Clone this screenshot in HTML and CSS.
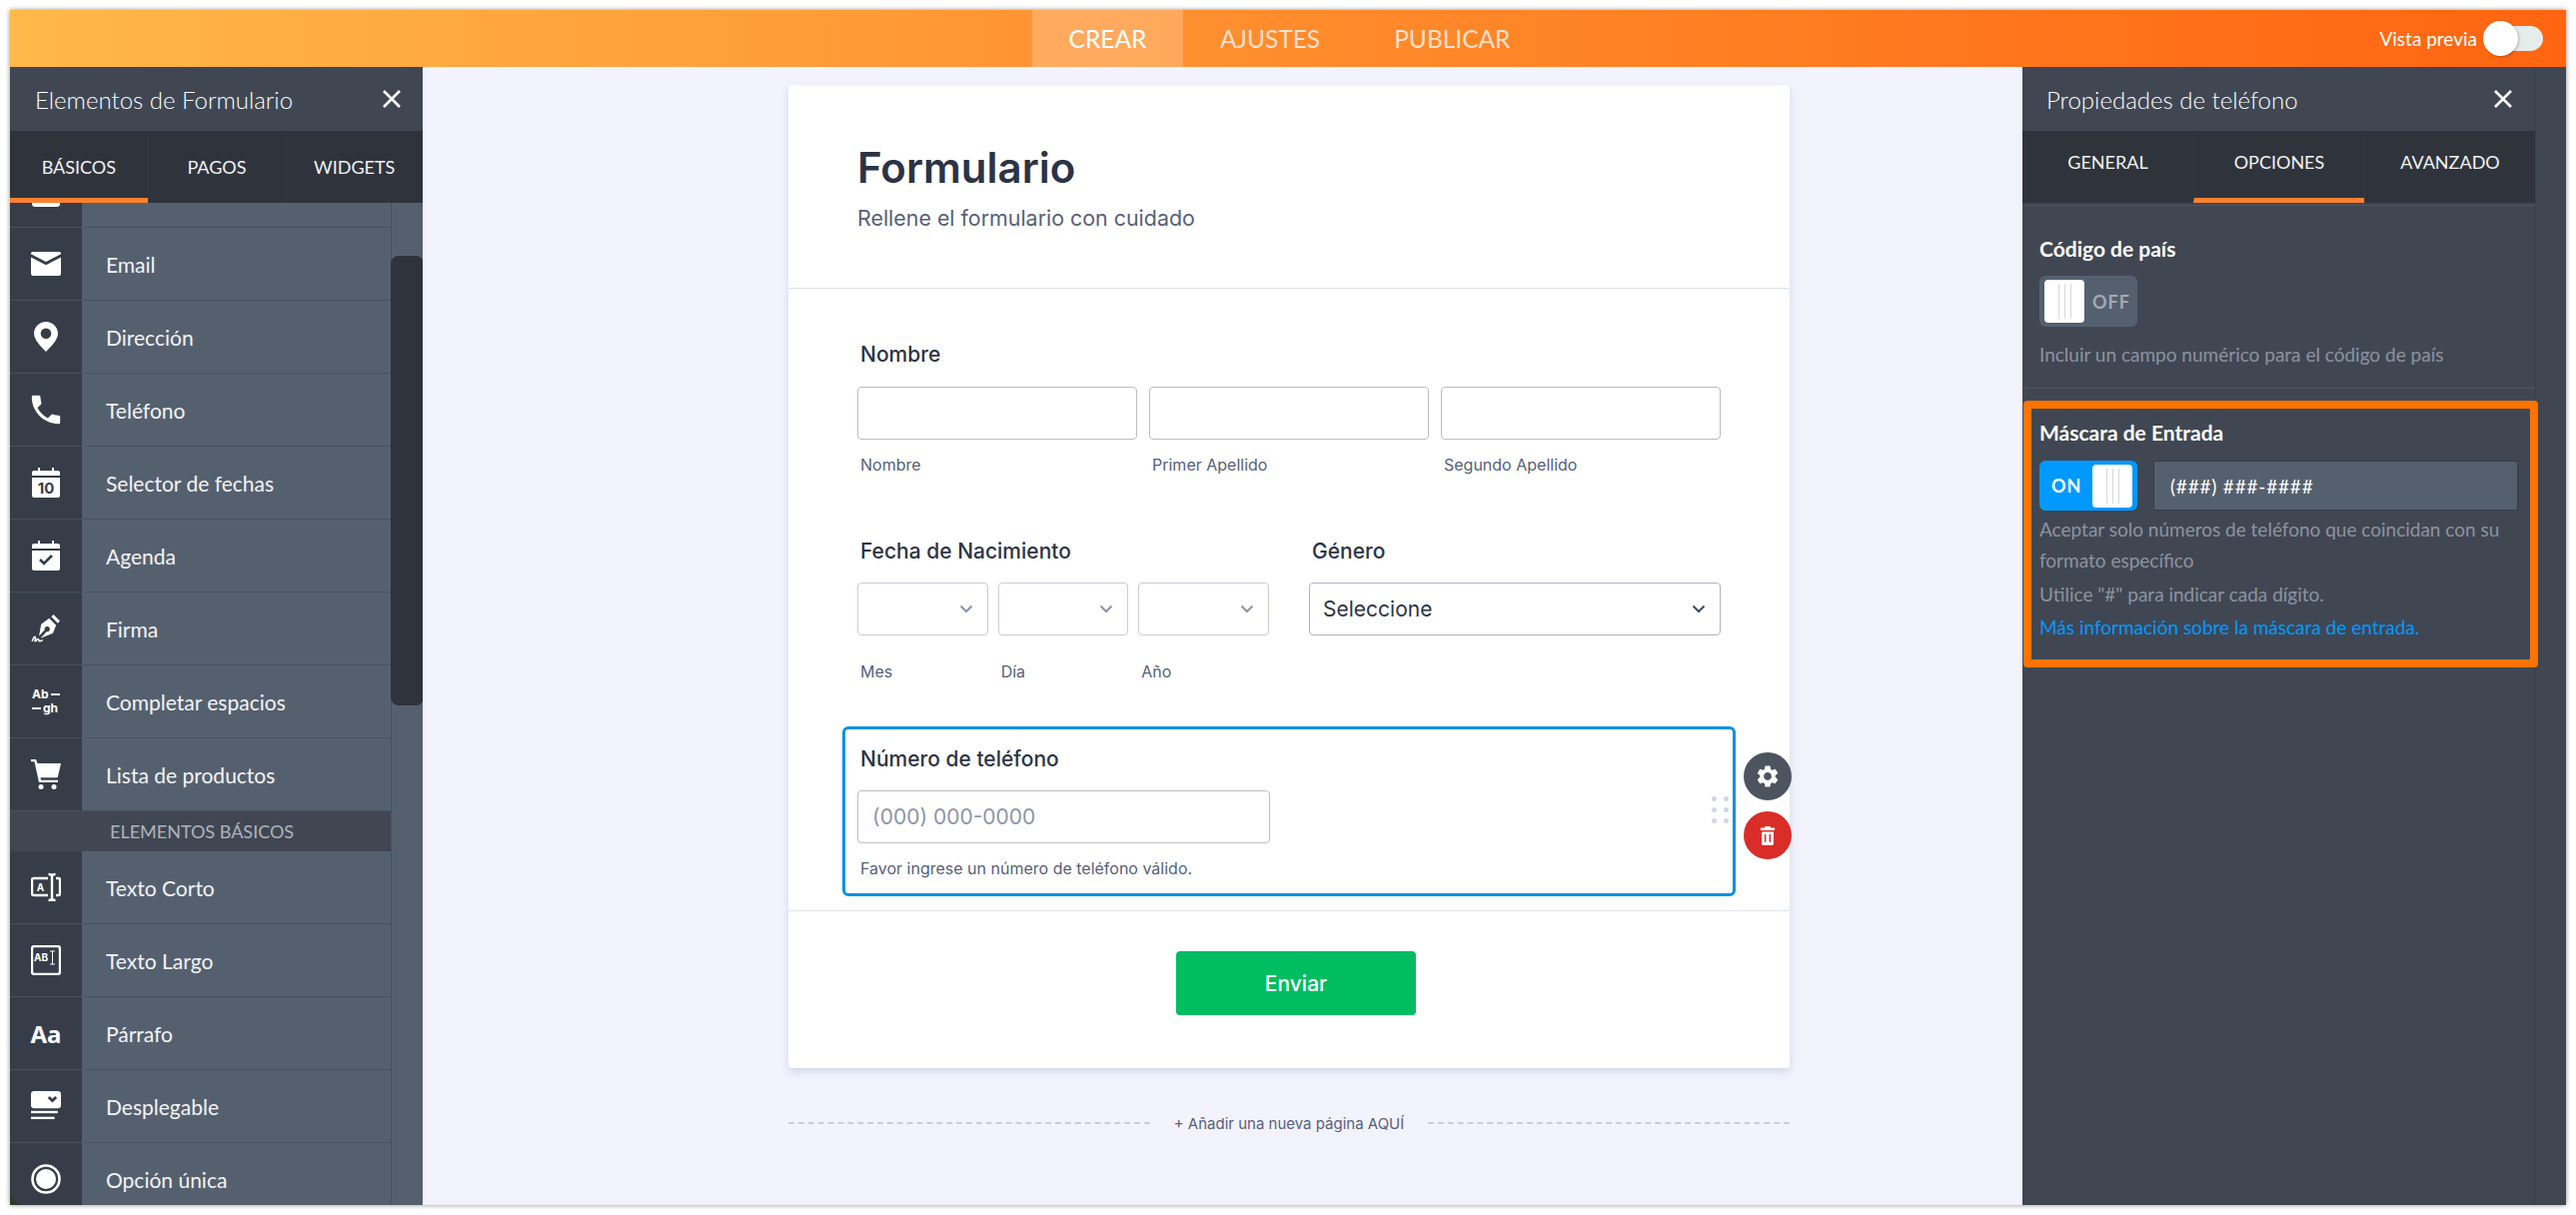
FILE: index.html
```html
<!DOCTYPE html>
<html lang="es">
<head>
    <meta charset="UTF-8">
    <meta name="viewport" content="width=device-width, initial-scale=1.0">
    <title>Formulario</title>
    <link rel="stylesheet" href="styles.css">
</head>
<body>
<div class="window">
    <header class="topbar">
        <nav class="topnav">
            <a class="topnav-item active">CREAR</a>
            <a class="topnav-item">AJUSTES</a>
            <a class="topnav-item">PUBLICAR</a>
        </nav>
        <div class="preview">
            <span>Vista previa</span>
            <div class="preview-switch"><div class="preview-knob"></div></div>
        </div>
    </header>

    <div class="main">
        <!-- left panel -->
        <aside class="elements">
            <div class="panel-head">
                <span>Elementos de Formulario</span>
                <svg class="close" viewBox="0 0 20 20"><path d="M2 2l16 16M18 2L2 18"/></svg>
            </div>
            <div class="tabs">
                <div class="tab active">BÁSICOS</div>
                <div class="tab">PAGOS</div>
                <div class="tab">WIDGETS</div>
            </div>
            <div class="list-wrap">
                <div class="list">
                    <div class="row row-cut"><div class="row-icon"><div class="cut-icon"></div></div><div class="row-text"></div></div>
                    <div class="row">
                        <div class="row-icon"><svg viewBox="0 0 30 24"><path d="M2 0h26c1 0 2 .6 2 1.500v.7L15 10 0 2.200v-.7C0 .6 1 0 2 0zM0 5.400l15 7.800 15-7.800V22c0 1.100-.9 2-2 2H2c-1.100 0-2-.9-2-2z"/></svg></div>
                        <div class="row-text">Email</div>
                    </div>
                    <div class="row">
                        <div class="row-icon"><svg viewBox="0 0 24 30"><path fill-rule="evenodd" d="M12 0C5.400 0 0 5.200 0 11.800 0 18.500 8 26 12 30c4-4 12-11.500 12-18.200C24 5.200 18.600 0 12 0zm0 6.500a5.300 5.300 0 1 1 0 10.600 5.300 5.300 0 0 1 0-10.600z"/></svg></div>
                        <div class="row-text">Dirección</div>
                    </div>
                    <div class="row">
                        <div class="row-icon"><svg viewBox="2.500 2.500 19 19"><path d="M6.600 10.800c1.400 2.800 3.800 5.100 6.600 6.600l2.200-2.200c.3-.3.7-.4 1-.2 1.100.4 2.300.6 3.600.6.600 0 1 .4 1 1V20c0 .6-.4 1-1 1C10.600 21 3 13.400 3 4c0-.6.4-1 1-1h3.500c.6 0 1 .4 1 1 0 1.200.2 2.400.6 3.600.1.3 0 .7-.2 1z"/></svg></div>
                        <div class="row-text">Teléfono</div>
                    </div>
                    <div class="row">
                        <div class="row-icon"><svg viewBox="0 0 28 30"><path d="M6 0h2v3h12V0h2v3h4c1.100 0 2 .9 2 2v3H0V5c0-1.100.9-2 2-2h4zM0 10h28v18c0 1.100-.9 2-2 2H2c-1.100 0-2-.9-2-2z"/><text x="14" y="26" class="ico-num">10</text></svg></div>
                        <div class="row-text">Selector de fechas</div>
                    </div>
                    <div class="row">
                        <div class="row-icon"><svg viewBox="0 0 28 30"><path d="M6 0h2v3h12V0h2v3h4c1.100 0 2 .9 2 2v3H0V5c0-1.100.9-2 2-2h4zM0 10h28v18c0 1.100-.9 2-2 2H2c-1.100 0-2-.9-2-2z"/><path class="ico-check" d="M8 19l4 4 8-8"/></svg></div>
                        <div class="row-text">Agenda</div>
                    </div>
                    <div class="row">
                        <div class="row-icon"><svg viewBox="0 0 28 28"><path d="M21 1l6 6-2 2-6-6zM17 4.500l6.500 6.500-3 7.500L9 23l5.500-6a2.500 2.500 0 1 0-1.700-1.500L7.500 21 9.500 10z"/><path class="ico-squig" d="M1 26c1-2 2-5 3-4s-1 4 0 4 2-3 3-2 0 2 1 2 2-1 3-1"/></svg></div>
                        <div class="row-text">Firma</div>
                    </div>
                    <div class="row">
                        <div class="row-icon">
                            <div class="blank-icon">
                                <div class="blank-line"><b>Ab</b><i></i></div>
                                <div class="blank-line"><i></i><b>gh</b></div>
                            </div>
                        </div>
                        <div class="row-text">Completar espacios</div>
                    </div>
                    <div class="row">
                        <div class="row-icon"><svg viewBox="0 0 30 30"><path d="M0 0h5l1.500 4H30l-3 13c-.2.800-.8 1.300-1.600 1.300H9.500l.5 2.500h17v2.200H8L3.500 2.200H0z"/><circle cx="10" cy="27.500" r="2.500"/><circle cx="23" cy="27.500" r="2.500"/></svg></div>
                        <div class="row-text">Lista de productos</div>
                    </div>
                    <div class="section-title">ELEMENTOS BÁSICOS</div>
                    <div class="row">
                        <div class="row-icon"><svg class="ico-line" viewBox="0 0 30 28"><path d="M17 5H2.500C1.600 5 1 5.600 1 6.500v14c0 .9.600 1.500 1.500 1.500H17M25 5h2.500c.9 0 1.500.6 1.500 1.500v14c0 .9-.6 1.500-1.500 1.500H25M17.500 1c2 0 3.500.8 3.500 2v22c0 1.200-1.500 2-3.500 2M24.500 1c-2 0-3.500.8-3.500 2v22c0 1.200 1.500 2 3.500 2"/><text x="9.500" y="18" class="ico-small">A</text></svg></div>
                        <div class="row-text">Texto Corto</div>
                    </div>
                    <div class="row">
                        <div class="row-icon"><svg class="ico-line" viewBox="0 0 30 30"><rect x="1" y="1" width="28" height="28" rx="2.500"/><path class="ico-thin" d="M19 6h5M19 19h5M21.500 6v13"/><text x="10" y="15.500" class="ico-small">AB</text></svg></div>
                        <div class="row-text">Texto Largo</div>
                    </div>
                    <div class="row">
                        <div class="row-icon"><span class="aa-icon">Aa</span></div>
                        <div class="row-text">Párrafo</div>
                    </div>
                    <div class="row">
                        <div class="row-icon"><svg viewBox="0 0 28 28"><rect y="0" width="28" height="16" rx="3"/><path class="ico-check" d="M16.500 5.500l3.500 3.500 3.500-3.500"/><rect y="18.500" width="25" height="2.200"/><rect y="24" width="22" height="2.200"/></svg></div>
                        <div class="row-text">Desplegable</div>
                    </div>
                    <div class="row">
                        <div class="row-icon"><svg viewBox="0 0 30 30"><circle class="ico-ring" cx="15" cy="15" r="13.500"/><circle cx="15" cy="15" r="10"/></svg></div>
                        <div class="row-text">Opción única</div>
                    </div>
                </div>
                <div class="scroll-track"><div class="scroll-thumb"></div></div>
            </div>
        </aside>

        <!-- form preview -->
        <main class="canvas">
            <form class="card">
                <div class="card-head">
                    <h1>Formulario</h1>
                    <p>Rellene el formulario con cuidado</p>
                </div>
                <div class="card-body">
                    <div class="field first">
                        <label class="field-label">Nombre</label>
                        <div class="name-grid">
                            <div><input class="text-input" type="text"><span class="sub">Nombre</span></div>
                            <div><input class="text-input" type="text"><span class="sub">Primer Apellido</span></div>
                            <div><input class="text-input" type="text"><span class="sub">Segundo Apellido</span></div>
                        </div>
                    </div>
                    <div class="two-col">
                        <div class="field">
                            <label class="field-label">Fecha de Nacimiento</label>
                            <div class="date-grid">
                                <div>
                                    <div class="select"><svg class="chev" viewBox="0 0 14 9"><path d="M1.500 1.500L7 7l5.500-5.500"/></svg></div>
                                    <span class="sub date-sub">Mes</span>
                                </div>
                                <div>
                                    <div class="select"><svg class="chev" viewBox="0 0 14 9"><path d="M1.500 1.500L7 7l5.500-5.500"/></svg></div>
                                    <span class="sub date-sub">Día</span>
                                </div>
                                <div>
                                    <div class="select"><svg class="chev" viewBox="0 0 14 9"><path d="M1.500 1.500L7 7l5.500-5.500"/></svg></div>
                                    <span class="sub date-sub">Año</span>
                                </div>
                            </div>
                        </div>
                        <div class="field">
                            <label class="field-label">Género</label>
                            <div class="select strong"><span>Seleccione</span><svg class="chev dark" viewBox="0 0 14 9"><path d="M1.500 1.500L7 7l5.500-5.500"/></svg></div>
                        </div>
                    </div>
                    <div class="field selected">
                        <label class="field-label">Número de teléfono</label>
                        <input class="text-input phone" type="text" placeholder="(000) 000-0000">
                        <span class="sub">Favor ingrese un número de teléfono válido.</span>
                        <div class="drag">
                            <i></i><i></i><i></i><i></i><i></i><i></i>
                        </div>
                        <div class="float-btn gear"><svg viewBox="0 0 24 24"><path d="M19.140 12.940c.04-.3.06-.61.06-.94 0-.32-.02-.64-.07-.94l2.030-1.580c.18-.14.23-.41.12-.61l-1.920-3.320c-.12-.22-.37-.29-.59-.22l-2.390.96c-.5-.38-1.030-.7-1.620-.94l-.36-2.540c-.04-.24-.24-.41-.48-.41h-3.840c-.24 0-.43.17-.47.41l-.36 2.540c-.59.24-1.130.57-1.620.94l-2.390-.96c-.22-.08-.47 0-.59.22L2.740 8.870c-.12.21-.08.47.12.61l2.030 1.580c-.05.3-.09.63-.09.94s.02.64.07.94l-2.030 1.580c-.18.14-.23.41-.12.61l1.920 3.320c.12.22.37.29.59.22l2.390-.96c.5.38 1.030.7 1.620.94l.36 2.540c.05.24.24.41.48.41h3.840c.24 0 .44-.17.47-.41l.36-2.540c.59-.24 1.130-.56 1.620-.94l2.390.96c.22.08.47 0 .59-.22l1.920-3.320c.12-.22.07-.47-.12-.61zM12 15.600c-1.980 0-3.600-1.620-3.600-3.600s1.620-3.600 3.600-3.600 3.600 1.620 3.600 3.600-1.620 3.600-3.600 3.600z"/></svg></div>
                        <div class="float-btn trash"><svg viewBox="0 0 20 24"><path fill-rule="evenodd" d="M7 0h6l1 2h5v3H1V2h5zM2.500 7h15v15c0 1.100-.9 2-2 2h-11c-1.100 0-2-.9-2-2zM6 10v10h2V10zm6 0v10h2V10z"/></svg></div>
                    </div>
                </div>
                <div class="card-foot">
                    <button class="submit" type="button">Enviar</button>
                </div>
            </form>
            <div class="add-page">
                <span class="dash"></span>
                <span class="add-text">+ Añadir una nueva página AQUÍ</span>
                <span class="dash"></span>
            </div>
        </main>

        <!-- right panel -->
        <aside class="props">
            <div class="props-inner">
                <div class="panel-head">
                    <span>Propiedades de teléfono</span>
                    <svg class="close" viewBox="0 0 20 20"><path d="M2 2l16 16M18 2L2 18"/></svg>
                </div>
                <div class="tabs tabs-right">
                    <div class="tab">GENERAL</div>
                    <div class="tab active">OPCIONES</div>
                    <div class="tab">AVANZADO</div>
                </div>
                <section class="prop country">
                    <h3>Código de país</h3>
                    <div class="toggle off">
                        <div class="knob"><i></i><i></i><i></i></div>
                        <span>OFF</span>
                    </div>
                    <p class="prop-desc">Incluir un campo numérico para el código de país</p>
                </section>
                <section class="prop mask">
                    <h3>Máscara de Entrada</h3>
                    <div class="mask-row">
                        <div class="toggle on">
                            <span>ON</span>
                            <div class="knob"><i></i><i></i><i></i></div>
                        </div>
                        <input class="mask-input" type="text" value="(###) ###-####">
                    </div>
                    <p class="prop-desc tall">Aceptar solo números de teléfono que coincidan con su formato específico</p>
                    <p class="prop-desc tall gap">Utilice "#" para indicar cada dígito.</p>
                    <a class="prop-link">Más información sobre la máscara de entrada.</a>
                </section>
            </div>
        </aside>
    </div>
</div>
</body>
</html>
```

FILE: styles.css
```css
* {
    box-sizing: border-box;
}

body {
    margin: 0;
    padding: 10px;
    height: 1216px;
    background-color: #ffffff;
    font-family: 'Lato', 'Liberation Sans', sans-serif;
    overflow: hidden;
}

.window {
    height: 1196px;
    display: flex;
    flex-direction: column;
    background-color: #2b3a2c;
    box-shadow: 0 0 5px rgba(0, 0, 0, 0.45);
    overflow: hidden;
}

/* top bar */
.topbar {
    height: 57px;
    flex-shrink: 0;
    display: flex;
    justify-content: space-between;
    background: linear-gradient(90deg, #ffb84a 0%, #ff8c2c 50%, #ff6510 100%);
}

.topnav {
    display: flex;
    margin-left: 1023px;
}

.topnav-item {
    display: flex;
    align-items: center;
    justify-content: center;
    padding: 0 37px;
    font-size: 24.5px;
    color: rgba(255, 255, 255, 0.75);
}

.topnav-item.active {
    width: 151px;
    padding: 0;
    background-color: rgba(255, 255, 255, 0.22);
    color: #fff;
}

.preview {
    display: flex;
    align-items: center;
    gap: 9px;
    padding-right: 23px;
    color: #fff;
    font-size: 19px;
}

.preview-switch {
    position: relative;
    width: 57px;
    height: 25px;
    border-radius: 13px;
    background-color: #e6ecea;
}

.preview-knob {
    position: absolute;
    left: -3px;
    top: -5px;
    width: 35px;
    height: 35px;
    border-radius: 50%;
    background-color: #fff;
    box-shadow: 1px 1px 3px rgba(0, 0, 0, 0.25);
}

.main {
    flex: 1;
    display: flex;
    min-height: 0;
}

/* panels */
.elements {
    width: 413px;
    flex-shrink: 0;
    display: flex;
    flex-direction: column;
    background-color: #404753;
    border-bottom-left-radius: 16px;
    overflow: hidden;
}

.panel-head {
    height: 64px;
    display: flex;
    align-items: center;
    justify-content: space-between;
    padding: 0 21px 0 25px;
    font-size: 24px;
    font-weight: 300;
    color: #ffffff;
}

.close {
    width: 20px;
    height: 20px;
    fill: none;
    stroke: #fff;
    stroke-width: 2.6;
}

.tabs {
    height: 72px;
    display: grid;
    grid-template-columns: 1fr 1fr 1fr;
    background-color: #2f333b;
}

.tab {
    display: flex;
    align-items: center;
    justify-content: center;
    font-size: 18px;
    color: #f1f2f4;
    border-left: 1px solid #343942;
}

.tab:first-child {
    border-left: none;
}

.tab.active {
    padding-top: 5px;
    border-bottom: 5px solid #ff8130;
}

.list-wrap {
    flex: 1;
    display: flex;
    min-height: 0;
}

.list {
    width: 381px;
    flex-shrink: 0;
}

.row {
    height: 73px;
    display: flex;
    border-bottom: 1px solid #475160;
}

.row-cut {
    height: 25px;
}

.row-icon {
    width: 72px;
    flex-shrink: 0;
    display: flex;
    align-items: center;
    justify-content: center;
    background-color: #363d49;
}

.row-cut .row-icon {
    align-items: flex-start;
}

.cut-icon {
    width: 28px;
    height: 4px;
    background-color: #fff;
    border-radius: 0 0 3px 3px;
}

.row-icon svg {
    width: 30px;
    height: 30px;
    fill: #fff;
}

.row-text {
    flex: 1;
    display: flex;
    align-items: center;
    padding-left: 24px;
    background-color: #55606f;
    color: #f3f4f6;
    font-size: 21px;
}

.section-title {
    height: 40px;
    display: flex;
    align-items: center;
    padding-left: 100px;
    background-color: #404753;
    color: #aeb3bb;
    font-size: 18px;
}

/* icon details */
.ico-num {
    font-family: 'Inter', sans-serif;
    font-size: 15px;
    font-weight: 700;
    fill: #363d49;
    text-anchor: middle;
}

.ico-check {
    fill: none;
    stroke: #363d49;
    stroke-width: 2.6;
}

.ico-squig {
    fill: none;
    stroke: #fff;
    stroke-width: 1.4;
}

.row-icon svg.ico-line {
    fill: none;
    stroke: #fff;
    stroke-width: 2.4;
}

.ico-line .ico-thin {
    stroke-width: 1;
}

.ico-small {
    font-family: 'Inter', sans-serif;
    font-size: 10px;
    font-weight: 700;
    fill: #fff;
    stroke: none;
    text-anchor: middle;
}

.ico-ring {
    fill: none;
    stroke: #fff;
    stroke-width: 2.6;
}

.blank-icon {
    width: 28px;
    font-family: 'Inter', sans-serif;
    font-size: 12px;
    font-weight: 700;
    color: #fff;
    line-height: 14px;
}

.blank-line {
    display: flex;
    align-items: center;
    gap: 2px;
}

.blank-line b {
    font-weight: 700;
}

.blank-line i {
    width: 9px;
    height: 2.5px;
    background-color: #fff;
}

.aa-icon {
    font-family: 'Noto Sans', sans-serif;
    font-size: 24px;
    font-weight: 700;
    color: #fff;
}

.scroll-track {
    position: relative;
    flex: 1;
    background-color: #55606f;
    border-left: 1px solid #475160;
}

.scroll-thumb {
    position: absolute;
    top: 53px;
    left: -1px;
    width: 33px;
    height: 450px;
    border-radius: 8px;
    background-color: #2f333b;
}

/* canvas */
.canvas {
    flex: 1;
    min-width: 0;
    padding: 18px 0 0 366px;
    background-color: #f3f3fe;
}

.card {
    width: 1002px;
    height: 984px;
    display: flex;
    flex-direction: column;
    background-color: #fff;
    border-radius: 4px;
    box-shadow: 0 4px 8px rgba(87, 114, 151, 0.22);
    font-family: 'Inter', sans-serif;
}

.card-head {
    height: 204px;
    padding: 58px 0 0 69px;
    border-bottom: 1px solid #dfe1ea;
}

.card-head h1 {
    margin: 0;
    font-size: 42px;
    line-height: 50px;
    font-weight: 600;
    color: #2c3345;
}

.card-head p {
    margin: 12px 0 0;
    font-size: 21.4px;
    line-height: 26px;
    color: #57607a;
}

.card-body {
    padding: 54px 69px 0;
}

.field-label {
    display: block;
    padding-left: 3px;
    margin-bottom: 20px;
    font-size: 21px;
    line-height: 24px;
    font-weight: 500;
    color: #2c3345;
}

.name-grid {
    display: grid;
    grid-template-columns: repeat(3, 1fr);
    gap: 12px;
}

.text-input {
    display: block;
    width: 100%;
    height: 53px;
    border: 1px solid #b8bdc9;
    border-radius: 4px;
    background-color: #fff;
    font-family: 'Inter', sans-serif;
    font-size: 21px;
    padding: 0 14px;
}

.text-input::placeholder {
    color: #8f94a8;
}

.sub {
    display: block;
    margin-top: 15px;
    padding-left: 3px;
    font-size: 16px;
    line-height: 20px;
    color: #57607a;
}

.date-sub {
    margin-top: 26px;
}

.two-col {
    display: grid;
    grid-template-columns: 1fr 1fr;
    gap: 40px;
    margin-top: 65px;
}

.two-col .field-label {
    margin-bottom: 19px;
}

.date-grid {
    display: grid;
    grid-template-columns: repeat(3, 1fr);
    gap: 10px;
}

.select {
    height: 53px;
    display: flex;
    align-items: center;
    justify-content: flex-end;
    padding: 0 14px;
    border: 1px solid #c9ccd8;
    border-radius: 4px;
    background-color: #fff;
}

.select.strong {
    justify-content: space-between;
    border-color: #b0b4c2;
    padding: 0 14px 0 13px;
    font-size: 21px;
    color: #2c3345;
}

.chev {
    width: 14px;
    height: 9px;
    fill: none;
    stroke: #8f94a8;
    stroke-width: 2;
}

.chev.dark {
    stroke: #434a60;
}

.field.selected {
    position: relative;
    width: 894px;
    margin: 45px 0 0 -15px;
    padding: 18px 12px 15px;
    border: 3px solid #0293e2;
    border-radius: 6px;
}

.selected .field-label {
    margin-bottom: 19px;
}

.phone {
    width: 413px;
}

.drag {
    position: absolute;
    right: 4px;
    top: 67px;
    display: grid;
    grid-template-columns: 5px 5px;
    gap: 6px 7px;
}

.drag i {
    width: 5px;
    height: 5px;
    border-radius: 50%;
    background-color: #d3d6e2;
}

.float-btn {
    position: absolute;
    left: 899px;
    width: 48px;
    height: 48px;
    border-radius: 50%;
    display: flex;
    align-items: center;
    justify-content: center;
}

.float-btn svg {
    fill: #fff;
}

.gear {
    top: 23px;
    background-color: #4c545f;
}

.gear svg {
    width: 26px;
    height: 26px;
}

.trash {
    top: 82px;
    background-color: #d92d27;
}

.trash svg {
    width: 16px;
    height: 19px;
}

.card-foot {
    margin-top: 14px;
    padding: 40px 0 0 14px;
    border-top: 1px solid #e3e4ec;
    display: flex;
    justify-content: center;
}

.submit {
    width: 240px;
    height: 64px;
    border: none;
    border-radius: 4px;
    background-color: #01bd61;
    color: #fff;
    font-family: 'Inter', sans-serif;
    font-size: 21px;
    font-weight: 500;
}

.add-page {
    width: 1002px;
    height: 20px;
    margin-top: 45px;
    display: flex;
    align-items: center;
    font-family: 'Inter', sans-serif;
}

.dash {
    flex: 1;
    border-top: 2px dashed #c9cde2;
}

.add-text {
    padding: 0 24px;
    font-size: 15px;
    color: #57607a;
}

/* right panel */
.props {
    width: 544px;
    flex-shrink: 0;
    background-color: #404753;
}

.props-inner {
    width: 514px;
    height: 100%;
    border-right: 1px solid #3a404b;
}

.props-inner .panel-head {
    padding: 0 22px 0 24px;
}

.tabs-right {
    margin-bottom: 2px;
}

.tabs-right .tab {
    padding: 0 0 10px;
}

.tabs-right .tab.active {
    padding: 0 0 5px;
}

.prop h3 {
    margin: 0;
    font-size: 21px;
    line-height: 24px;
    font-weight: 700;
    color: #fff;
}

.country {
    height: 184px;
    padding: 31px 17px 0;
    border-top: 1px solid #4c5462;
    border-bottom: 1px solid #4c5462;
}

.toggle {
    width: 98px;
    height: 51px;
    display: flex;
    align-items: center;
    border-radius: 6px;
    font-size: 18px;
    font-weight: 700;
    letter-spacing: 1px;
}

.toggle.off {
    margin-top: 15px;
    padding-left: 5px;
    gap: 8px;
    background-color: #55606f;
    color: #a3a9b3;
}

.toggle.on {
    justify-content: space-between;
    height: 50px;
    padding: 0 5px 0 12px;
    background-color: #0099ff;
    color: #fff;
}

.knob {
    width: 40px;
    height: 43px;
    display: flex;
    align-items: stretch;
    justify-content: center;
    gap: 5px;
    padding: 4px 0;
    border-radius: 4px;
    background-color: #fff;
}

.knob i {
    width: 1px;
    background-color: #d6d8dc;
}

.prop-desc {
    margin: 18px 0 0;
    font-size: 19px;
    line-height: 20px;
    color: #8d939e;
}

.mask {
    width: 515px;
    height: 267px;
    margin: 12px 0 0 1px;
    padding: 12px 8px 0;
    border: 8px solid #ff7300;
    border-radius: 4px;
}

.mask-row {
    display: flex;
    gap: 16px;
    margin-top: 16px;
}

.mask-input {
    width: 365px;
    height: 50px;
    padding: 0 16px;
    border: 1px solid #363d49;
    border-radius: 2px;
    background-color: #55606f;
    color: #fff;
    font-family: 'Lato', sans-serif;
    font-size: 19px;
    letter-spacing: 0.8px;
}

.prop-desc.tall {
    margin-top: 3px;
    line-height: 31px;
}

.prop-desc.gap {
    margin-top: 3px;
}

.prop-link {
    display: block;
    margin-top: 2px;
    font-size: 19px;
    line-height: 31px;
    color: #0099ff;
}
```
